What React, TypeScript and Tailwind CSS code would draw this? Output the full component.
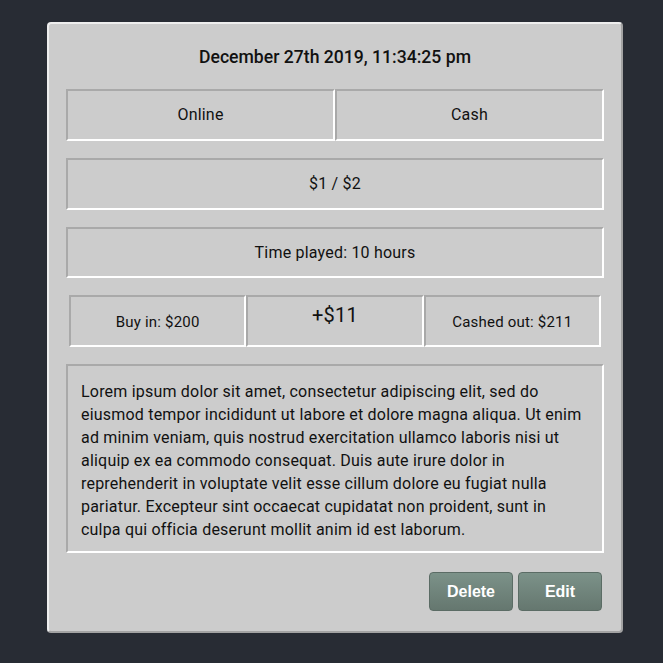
import React from "react";

const LOREM =
  "Lorem ipsum dolor sit amet, consectetur adipiscing elit, sed do eiusmod tempor incididunt ut labore et dolore magna aliqua. Ut enim ad minim veniam, quis nostrud exercitation ullamco laboris nisi ut aliquip ex ea commodo consequat. Duis aute irure dolor in reprehenderit in voluptate velit esse cillum dolore eu fugiat nulla pariatur. Excepteur sint occaecat cupidatat non proident, sunt in culpa qui officia deserunt mollit anim id est laborum.";

// inset-looking cell: grey top/left, white bottom/right
const cell =
  "border-2 border-t-[#a9a9a9] border-l-[#a9a9a9] border-b-white border-r-white flex items-center justify-center";

export default function App() {
  return (
    <div
      className="min-h-[663px] bg-[#282c34] pt-[22px] pl-[47px] tracking-[0.2px]"
      style={{ fontFamily: "Roboto, 'Noto Sans', sans-serif" }}
    >
      <div className="w-[576px] h-[611px] rounded-[4px] bg-[#cccccc] border-2 border-t-[#eeeeee] border-l-[#eeeeee] border-b-[#a3a3a3] border-r-[#a3a3a3] px-[17px] text-[#111]">
        <h3 className="h-[65px] flex items-center justify-center pt-[2px] text-[17.6px] font-medium tracking-normal">
          December 27th 2019, 11:34:25 pm
        </h3>

        <div className="flex flex-col gap-[17px]">
          <div className="grid grid-cols-2 h-[52px]">
            <div className={cell}>Online</div>
            <div className={cell}>Cash</div>
          </div>

          <div className={`${cell} h-[52px]`}>$1 / $2</div>

          <div className={`${cell} h-[51px]`}>Time played: 10 hours</div>

          <div className="grid grid-cols-3 h-[52px] mx-[3px]">
            <div className={`${cell} text-[15px] pt-[2px]`}>Buy in: $200</div>
            <div className={`${cell} !items-start pt-[3px] text-[20px]`}>+$11</div>
            <div className={`${cell} text-[15px] pt-[2px]`}>Cashed out: $211</div>
          </div>

          <div className={`${cell} !block h-[189px] px-[13px] pt-[14px] text-[16px] leading-[23px]`}>
            {LOREM}
          </div>
        </div>

        <div className="flex justify-end gap-[5px] mt-[19px] pr-[2px]">
          {["Delete", "Edit"].map((label) => (
            <button
              key={label}
              className="w-[84px] h-[39px] rounded-[4px] border border-[#5b6c65] bg-gradient-to-b from-[#7c9289] to-[#65776f] text-white font-bold text-[16px] tracking-normal"
              style={{ fontFamily: "'Liberation Sans', Arial, sans-serif" }}
            >
              {label}
            </button>
          ))}
        </div>
      </div>
    </div>
  );
}
